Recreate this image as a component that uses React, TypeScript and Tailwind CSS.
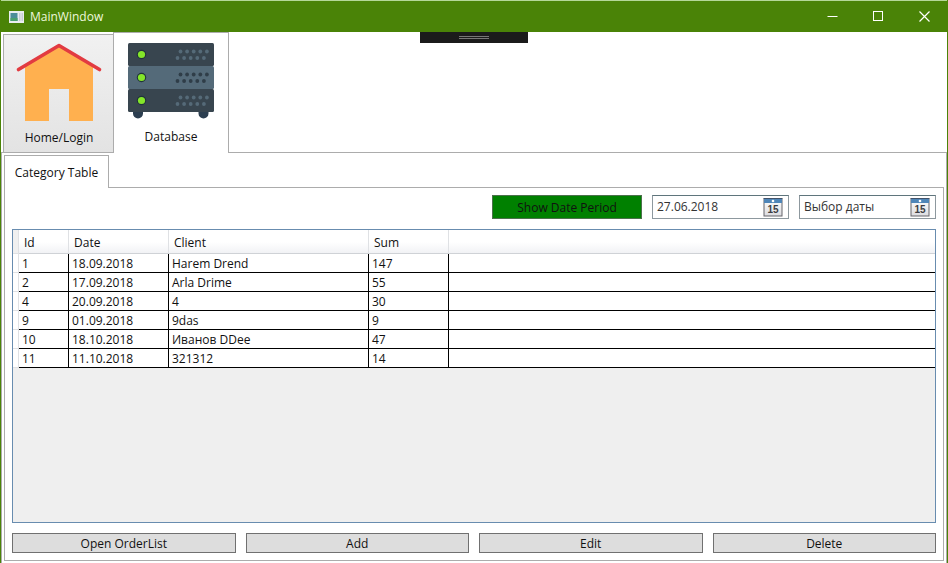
import React from "react";

const orders = [
  { id: 1, date: "18.09.2018", client: "Harem Drend", sum: 147 },
  { id: 2, date: "17.09.2018", client: "Arla Drime", sum: 55 },
  { id: 4, date: "20.09.2018", client: "4", sum: 30 },
  { id: 9, date: "01.09.2018", client: "9das", sum: 9 },
  { id: 10, date: "18.10.2018", client: "Иванов DDee", sum: 47 },
  { id: 11, date: "11.10.2018", client: "321312", sum: 14 },
];

function HouseIcon() {
  return (
    <svg width="88" height="80" viewBox="0 0 88 80" aria-hidden="true">
      <path d="M10 23 44 4l34 19v56H54V47H34v32H10Z" fill="#ffb04f" />
      <path d="M3.500 27.500 44 3.500 84.500 27.500" fill="none" stroke="#e23b41" strokeWidth="3.600" strokeLinecap="round" strokeLinejoin="round" />
    </svg>
  );
}

function ServerUnit({ y, fill, dot }: { y: number; fill: string; dot: string }) {
  return (
    <g>
      <rect x="0" y={y} width="86" height="23" rx="1.500" fill={fill} />
      <circle cx="13.500" cy={y + 11.5} r="4.700" fill="#20333a" />
      <circle cx="13.500" cy={y + 11.5} r="3.600" fill="#84e62a" />
      {[0, 1, 2, 3, 4].map((i) => (
        <g key={i} fill={dot}>
          <circle cx={52.5 + i * 6.6} cy={y + 8.5} r="1.900" />
          <circle cx={49.5 + i * 6.6} cy={y + 15} r="1.900" />
        </g>
      ))}
    </g>
  );
}

function ServerIcon() {
  return (
    <svg width="86" height="76" viewBox="0 0 86 76" aria-hidden="true">
      <path d="M5 68h10v2.500a5 5 0 0 1-10 0ZM70.500 68h10v2.500a5 5 0 0 1-10 0Z" fill="#2c3e50" />
      <ServerUnit y={0} fill="#38454f" dot="#556a78" />
      <ServerUnit y={23} fill="#546a79" dot="#2f3d48" />
      <ServerUnit y={46} fill="#38454f" dot="#556a78" />
    </svg>
  );
}

function CalendarIcon() {
  return (
    <svg width="20" height="19" viewBox="0 0 20 19" aria-hidden="true">
      <defs>
        <linearGradient id="page" x1="0" y1="0" x2="0" y2="1">
          <stop offset="0" stopColor="#ffffff" />
          <stop offset="1" stopColor="#dcdce0" />
        </linearGradient>
      </defs>
      <rect x="1" y="1" width="18" height="17" fill="url(#page)" stroke="#65656b" />
      <rect x="1" y="1" width="18" height="4" fill="#4f86b8" />
      <path d="M.500 .500h19" stroke="#43536a" />
      <circle cx="10" cy="3" r="1.300" fill="#fff" />
      <text x="10" y="15" textAnchor="middle" fontSize="10" fontWeight="700" fill="#3d3d42" fontFamily="Liberation Sans, sans-serif">15</text>
    </svg>
  );
}

function DateField({ label, value, placeholder }: { label: string; value?: string; placeholder?: string }) {
  return (
    <div className="flex h-6 w-[137px] items-center border border-[#8d989e] border-t-[#5f757c] bg-white pl-1 pr-[5px]">
      <input
        type="text"
        aria-label={label}
        defaultValue={value}
        placeholder={placeholder}
        className="min-w-0 flex-1 bg-transparent leading-4 text-[#333] outline-none placeholder:text-[#333] placeholder:opacity-100"
      />
      <button type="button" aria-label={`${label} calendar`}>
        <CalendarIcon />
      </button>
    </div>
  );
}

function TitleBar() {
  return (
    <header className="flex h-8 shrink-0 items-center border-t border-[#b5d898] bg-[#4a8307] pl-2 text-[#eef8dc]">
      <svg width="15" height="12" viewBox="0 0 15 12" aria-hidden="true">
        <rect width="15" height="12" fill="#e9edf0" />
        <rect x="1.500" y="2" width="7" height="8" fill="#4b8d99" />
        <rect x="1.500" y="7" width="7" height="3" fill="#49a06e" />
        <rect x="10" y="2" width="1.500" height="8" fill="#c9ced6" />
        <rect x="12.500" y="2" width="1.500" height="8" fill="#c9ced6" />
      </svg>
      <h1 className="ml-[6px] flex-1 pt-px">MainWindow</h1>
      <button type="button" aria-label="Minimize" className="flex h-full w-[46px] items-center justify-center">
        <svg width="11" height="11" viewBox="0 0 11 11"><path d="M.500 5.500h10" stroke="#fff" /></svg>
      </button>
      <button type="button" aria-label="Maximize" className="flex h-full w-[46px] items-center justify-center">
        <svg width="11" height="11" viewBox="0 0 11 11"><rect x=".5" y=".5" width="9" height="9" fill="none" stroke="#fff" /></svg>
      </button>
      <button type="button" aria-label="Close" className="flex h-full w-[46px] items-center justify-center">
        <svg width="11" height="11" viewBox="0 0 11 11"><path d="m.500 .500 10 10m0-10-10 10" stroke="#fff" strokeWidth="1.200" /></svg>
      </button>
    </header>
  );
}

const headCell = "border-r border-b border-r-[#dfe1e4] border-b-[#cfd2d6] pt-[2px] pl-[5px] text-left font-normal";
const bodyCell = "border-r border-b border-black pt-[2px] pl-[3px]";

function OrdersGrid() {
  return (
    <div className="min-h-0 flex-1 overflow-hidden border border-[#688caf] bg-[#efefef]">
      <table className="w-full table-fixed border-separate border-spacing-0 leading-4">
        <colgroup>
          <col className="w-[6px]" />
          <col className="w-[50px]" />
          <col className="w-[100px]" />
          <col className="w-[200px]" />
          <col className="w-[80px]" />
          <col />
        </colgroup>
        <thead>
          <tr className="h-6 bg-linear-to-b from-white from-50% to-[#f0f1f4]">
            <td className="border-r border-b border-[#dfe1e4] bg-[#f0f0f0]" />
            <th scope="col" className={headCell}>Id</th>
            <th scope="col" className={headCell}>Date</th>
            <th scope="col" className={headCell}>Client</th>
            <th scope="col" className={headCell}>Sum</th>
            <td className="border-b border-[#cfd2d6]" />
          </tr>
        </thead>
        <tbody>
          {orders.map((o) => (
            <tr key={o.id} className="h-[19px] bg-white">
              <td className="border-r border-b border-[#dfe1e4]" />
              <td className={bodyCell}>{o.id}</td>
              <td className={bodyCell}>{o.date}</td>
              <td className={bodyCell}>{o.client}</td>
              <td className={bodyCell}>{o.sum}</td>
              <td className="border-b border-black" />
            </tr>
          ))}
        </tbody>
      </table>
    </div>
  );
}

export default function App() {
  return (
    <div className="flex h-screen flex-col border-x border-[#4a8307] bg-white font-['Open_Sans','Noto_Sans',sans-serif] text-xs text-[#111]">
      <TitleBar />
      <main className="relative flex min-h-0 flex-1 flex-col">
        <div className="absolute left-1/2 top-0 flex h-[11px] w-[108px] -translate-x-1/2 flex-col items-center justify-center gap-px bg-[#1b1b1b]">
          <span className="h-px w-[30px] bg-[#777]" />
          <span className="h-px w-[30px] bg-[#777]" />
        </div>
        <div role="tablist" className="flex shrink-0 items-end pl-[2px]">
          <button
            role="tab"
            type="button"
            aria-selected="false"
            className="flex h-[118px] w-[110px] flex-col items-center border border-r-0 border-b-0 border-[#acacac] bg-linear-to-b from-[#f1f1f1] to-[#e3e3e3] pt-[7px] pl-px"
          >
            <HouseIcon />
            <span className="mt-2 leading-4">Home/Login</span>
          </button>
          <button
            role="tab"
            type="button"
            aria-selected="true"
            className="relative -mb-px flex h-[121px] w-[116px] flex-col items-center border border-b-0 border-[#acacac] bg-white pt-[10px]"
          >
            <ServerIcon />
            <span className="mt-[10px] leading-4">Database</span>
          </button>
        </div>
        <section className="flex min-h-0 flex-1 flex-col border border-b-0 border-[#acacac] px-[2px] pt-[2px] pb-[2px]">
          <div role="tablist" className="flex shrink-0">
            <button
              role="tab"
              type="button"
              aria-selected="true"
              className="relative -mb-px h-[33px] w-[105px] border border-b-0 border-[#acacac] bg-white pt-px leading-4"
            >
              Category Table
            </button>
          </div>
          <div className="flex min-h-0 flex-1 flex-col gap-[10px] border border-[#acacac] px-[7px] py-[7px]">
            <div className="flex justify-end gap-[10px]">
              <button type="button" className="h-6 w-[150px] border border-[#4c704c] bg-[#008000] pt-[2px] leading-4">
                Show Date Period
              </button>
              <DateField label="Start date" value="27.06.2018" />
              <DateField label="End date" placeholder="Выбор даты" />
            </div>
            <OrdersGrid />
            <div className="grid shrink-0 grid-cols-4 gap-[10px]">
              {["Open OrderList", "Add", "Edit", "Delete"].map((name) => (
                <button key={name} type="button" className="h-5 border border-[#707070] bg-[#dddddd] pt-[2px] leading-4">
                  {name}
                </button>
              ))}
            </div>
          </div>
        </section>
      </main>
    </div>
  );
}
